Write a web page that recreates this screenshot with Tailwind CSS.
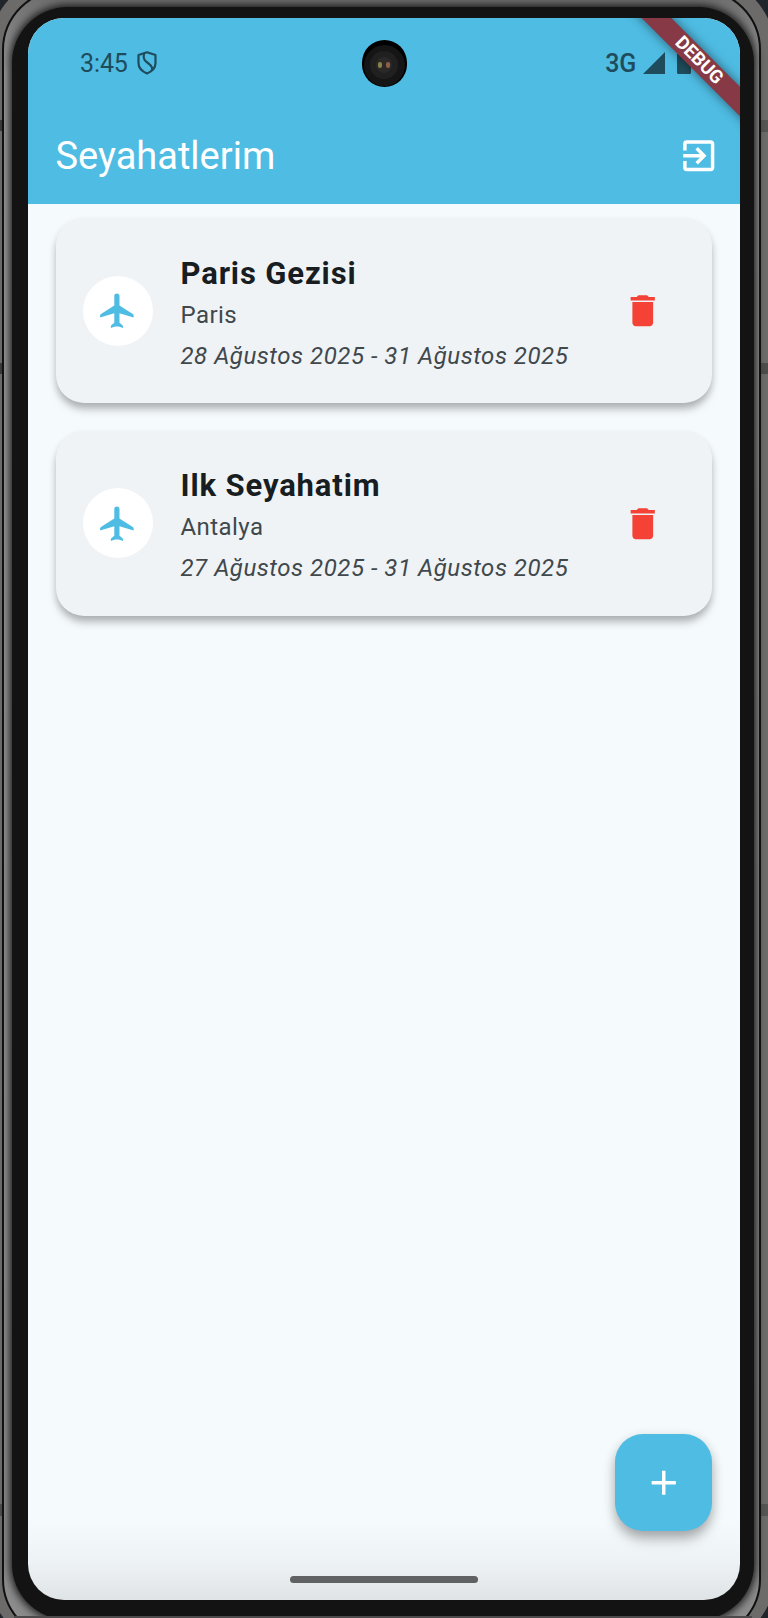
<!DOCTYPE html>
<html lang="tr">
<head>
<meta charset="utf-8">
<title>Seyahatlerim</title>
<script src="https://cdn.jsdelivr.net/npm/@tailwindcss/browser@4"></script>
</head>
<body class="w-[768px] h-[1618px] overflow-hidden bg-[#20242b] font-[Roboto,sans-serif]">
<div class="relative w-[768px] h-[1618px] overflow-hidden">
  <!-- device shell -->
  <div class="absolute -left-[11px] -top-[24px] w-[786px] h-[1672px] rounded-[74px] bg-[#6c6b6a]"></div>
  <div class="absolute left-0 top-[120px] w-[4px] h-[11px] bg-[#3a3a3a]"></div>
  <div class="absolute left-0 top-[363px] w-[4px] h-[11px] bg-[#3a3a3a]"></div>
  <div class="absolute left-0 top-[1504px] w-[3px] h-[12px] bg-[#4c4c4c]"></div>
  <div class="absolute right-0 top-[120px] w-[7px] h-[12px] bg-[#555554]"></div>
  <div class="absolute right-0 top-[363px] w-[7px] h-[11px] bg-[#4d4d4c]"></div>
  <div class="absolute right-0 top-[1504px] w-[7px] h-[12px] bg-[#555554]"></div>
  <div class="absolute left-[2px] -top-[11px] w-[759px] h-[1651px] rounded-[61px] border-2 border-[#111111] bg-linear-to-b from-[#6c6c6c] via-[#999999] via-5% to-[#8c8c8c]"></div>
  <div class="absolute left-[12px] top-[7px] w-[742px] h-[1613px] rounded-[56px] bg-[#131313] shadow-[0_0_8px_2px_#131313]"></div>
  <div class="absolute left-[14px] right-[16px] top-[1616px] h-[2px] bg-[#4d4a4b]"></div>

  <!-- screen -->
  <div class="absolute left-[28px] top-[18px] w-[712px] h-[1582px] rounded-[36px] overflow-hidden bg-[#f5fafd] flex flex-col">
    <header class="h-[186.300px] shrink-0 bg-[#4fbce3]">
      <div class="h-[90px] flex items-center pl-[52px] pr-[49px] text-[#1f4c5c]">
        <span class="text-[25px] leading-none tracking-[-0.100px]">3:45</span>
        <svg class="ml-[9px] w-[20px] h-[24px]" viewBox="0 0 20 24" fill="none" stroke="currentColor" stroke-width="2.2" stroke-linejoin="round"><path d="M10 1.300 18.500 4v8c0 5-4 8.600-8.500 10.500C5.500 20.600 1.500 17 1.500 12V4z"/><path d="M7 2.500C5.500 9 9 10.500 12 12.800c3 2.200 3.500 4 3 6"/></svg>
        <span class="ml-auto text-[25px] leading-none font-medium tracking-[-0.200px]">3G</span>
        <svg class="ml-[7px] w-[22px] h-[22px]" viewBox="0 0 22 22"><path d="M22 0v22H0z" fill="currentColor"/></svg>
        <svg class="ml-[12px] w-[14px] h-[22px]" viewBox="0 0 14 22"><path d="M4 0h6v2h4v18.500a1.500 1.500 0 0 1-1.500 1.500h-11A1.500 1.500 0 0 1 0 20.500V2h4z" fill="currentColor"/></svg>
      </div>
      <div class="h-[96px] flex items-center justify-between pl-[27.500px] pr-[20.500px] text-white">
        <h1 class="text-[38px] leading-none">Seyahatlerim</h1>
        <svg class="w-[41.500px] h-[41.500px]" viewBox="0 0 24 24" fill="currentColor"><path d="M10.090 15.590 11.500 17l5-5-5-5-1.410 1.410L12.670 11H3v2h9.670zM19 3H5a2 2 0 0 0-2 2v4h2V5h14v14H5v-4H3v4a2 2 0 0 0 2 2h14c1.100 0 2-.9 2-2V5c0-1.100-.9-2-2-2z"/></svg>
      </div>
    </header>

    <main class="px-[28px] pt-[13.700px] flex flex-col gap-[27.500px]">
      <section class="h-[185.500px] rounded-[28px] bg-[#eff3f6] shadow-[0_7px_8px_-1px_rgba(0,0,0,0.25),0_3px_7px_rgba(0,0,0,0.09)] flex items-center pl-[27px] pr-[48.500px]">
        <div class="w-[70px] h-[70px] rounded-full bg-white flex items-center justify-center">
          <svg class="w-[41.500px] h-[41.500px]" viewBox="0 0 24 24" fill="#4fbce3"><path d="M21.200 15.900v-1.200c0-.3-.2-.6-.5-.8L13 9V3.500a1.500 1.500 0 0 0-3 0V9l-7.700 4.900c-.3.200-.5.500-.5.800v1.200L10 13.500V19l-1.600 1.200c-.3.200-.4.500-.4.800v1c1.800-1.200 5.200-1.200 7 0v-1c0-.3-.1-.6-.4-.8L13 19v-5.500z"/></svg>
        </div>
        <div class="ml-[27.500px] pt-[9px] flex flex-col">
          <h2 class="text-[31px] leading-[42px] font-bold tracking-[0.87px] text-[#171d20]">Paris Gezisi</h2>
          <p class="text-[24px] leading-[40px] tracking-[0.43px] text-[#40484c]">Paris</p>
          <p class="text-[24px] leading-[42px] tracking-[0.530px] text-[#40484c] italic">28 Ağustos 2025 - 31 Ağustos 2025</p>
        </div>
        <svg class="ml-auto w-[41.500px] h-[41.500px]" viewBox="0 0 24 24" fill="#f44336"><path d="M6 19c0 1.100.9 2 2 2h8c1.100 0 2-.9 2-2V7H6zM19 4h-3.500l-1-1h-5l-1 1H5v2h14z"/></svg>
      </section>
      <section class="h-[185px] rounded-[28px] bg-[#eff3f6] shadow-[0_7px_8px_-1px_rgba(0,0,0,0.25),0_3px_7px_rgba(0,0,0,0.09)] flex items-center pl-[27px] pr-[48.500px]">
        <div class="w-[70px] h-[70px] rounded-full bg-white flex items-center justify-center">
          <svg class="w-[41.500px] h-[41.500px]" viewBox="0 0 24 24" fill="#4fbce3"><path d="M21.200 15.900v-1.200c0-.3-.2-.6-.5-.8L13 9V3.500a1.500 1.500 0 0 0-3 0V9l-7.700 4.900c-.3.200-.5.500-.5.800v1.200L10 13.500V19l-1.600 1.200c-.3.200-.4.500-.4.800v1c1.800-1.200 5.200-1.200 7 0v-1c0-.3-.1-.6-.4-.8L13 19v-5.500z"/></svg>
        </div>
        <div class="ml-[27.500px] pt-[7px] flex flex-col">
          <h2 class="text-[31px] leading-[42px] font-bold tracking-[0.87px] text-[#171d20]">Ilk Seyahatim</h2>
          <p class="text-[24px] leading-[40px] tracking-[0.43px] text-[#40484c]">Antalya</p>
          <p class="text-[24px] leading-[42px] tracking-[0.530px] text-[#40484c] italic">27 Ağustos 2025 - 31 Ağustos 2025</p>
        </div>
        <svg class="ml-auto w-[41.500px] h-[41.500px]" viewBox="0 0 24 24" fill="#f44336"><path d="M6 19c0 1.100.9 2 2 2h8c1.100 0 2-.9 2-2V7H6zM19 4h-3.500l-1-1h-5l-1 1H5v2h14z"/></svg>
      </section>
    </main>

    <div class="absolute inset-x-0 bottom-0 h-[80px] bg-linear-to-b from-black/0 via-black/3 to-black/9"></div>
    <button class="absolute right-[28px] bottom-[69px] w-[97px] h-[97px] rounded-[28px] bg-[#4fbce3] shadow-[0_9px_13px_-1px_rgba(0,0,0,0.25),0_3px_12px_rgba(0,0,0,0.14)] flex items-center justify-center">
      <svg class="w-[41.500px] h-[41.500px]" viewBox="0 0 24 24" fill="#fff"><path d="M19 13h-6v6h-2v-6H5v-2h6V5h2v6h6z"/></svg>
    </button>
    <div class="absolute left-[262px] bottom-[17px] w-[188px] h-[7px] rounded-full bg-[#5f6163]"></div>

    <!-- front camera -->
    <div class="absolute left-[333.500px] top-[22px] w-[45px] h-[47px] rounded-full bg-black flex items-center justify-center">
      <div class="w-[41px] h-[41px] mt-[3px] rounded-full bg-[#151515] flex items-center justify-center">
        <div class="w-[28px] h-[28px] rounded-full bg-[#202020] flex items-center justify-center">
          <div class="w-[16px] h-[16px] rounded-full bg-[#2b2828] flex items-center justify-center gap-[4px]"><i class="w-[4px] h-[6px] rounded-full bg-[#85824a] blur-[0.5px]"></i><i class="w-[4px] h-[6px] rounded-full bg-[#8f5e48] blur-[0.5px]"></i></div>
        </div>
      </div>
    </div>

    <!-- debug ribbon -->
    <div class="absolute left-[571px] top-[31.500px] w-[200px] h-[21px] rotate-45 bg-[#873a45] shadow-[0_0_11px_rgba(0,0,0,0.5)] flex items-center justify-center text-white text-[18.500px] leading-none font-bold">DEBUG</div>
  </div>
</div>
</body>
</html>
